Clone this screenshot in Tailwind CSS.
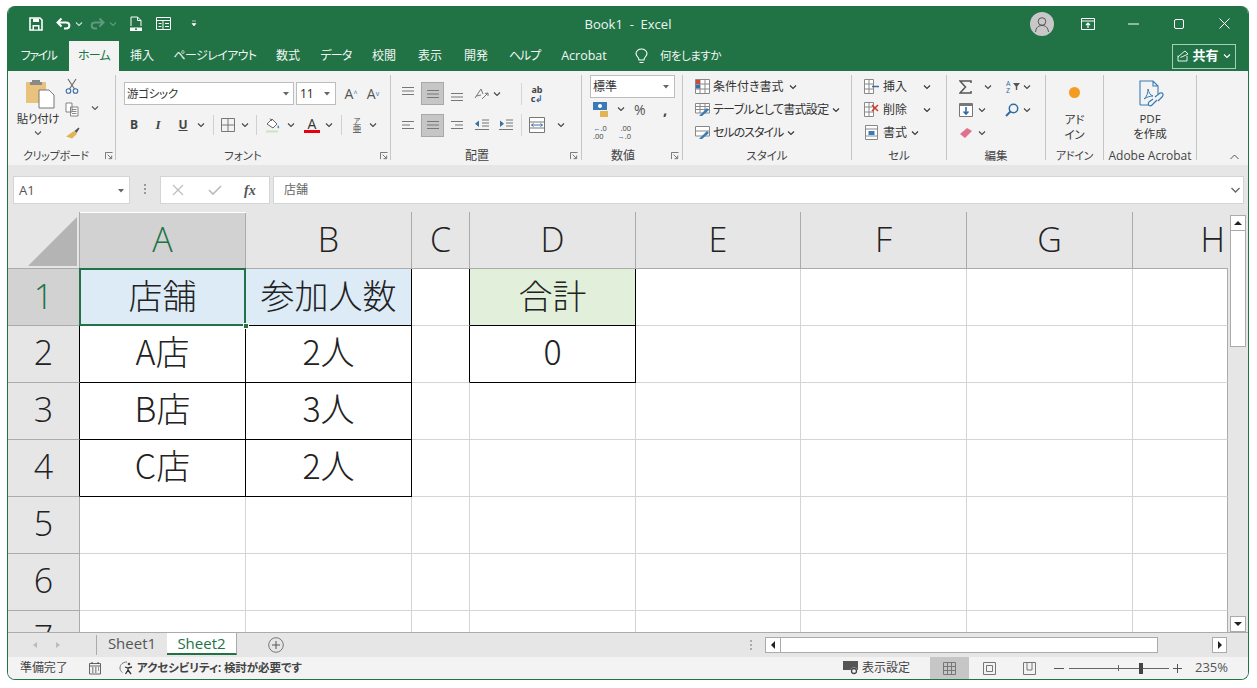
<!DOCTYPE html>
<html lang="ja">
<head>
<meta charset="UTF-8" />
<title>Book1 - Excel</title>
<script src="https://cdn.jsdelivr.net/npm/@tailwindcss/browser@4"></script>
</head>
<body class="bg-white w-[1257px] h-[688px] overflow-hidden font-['Noto_Sans','Noto_Sans_CJK_JP',sans-serif] [font-feature-settings:'palt'] text-[12px] text-[#444]">

<svg class="hidden">
  <symbol id="c" viewBox="0 0 8 8"><path d="M1 2.500L4 5.500L7 2.500" fill="none" stroke="currentColor" stroke-width="1.100"/></symbol>
  <symbol id="launch" viewBox="0 0 9 9"><path d="M.5 8V.5H8.500M3 3L7 7M4 7.500H7.500V4" fill="none" stroke="#666" stroke-width="1"/></symbol>
  <symbol id="lines" viewBox="0 0 14 10"><path d="M1 1.500H13M1 5H13M1 8.500H13" fill="none" stroke="#777" stroke-width="1"/></symbol>
  <symbol id="leftl" viewBox="0 0 14 10"><path d="M1 1.500H13M1 5H9M1 8.500H13" fill="none" stroke="#777" stroke-width="1"/></symbol>
  <symbol id="rightl" viewBox="0 0 14 10"><path d="M1 1.500H13M5 5H13M1 8.500H13" fill="none" stroke="#777" stroke-width="1"/></symbol>
</svg>

<div class="ml-[7px] mt-[6px] w-[1242px] h-[674px] rounded-[8px] overflow-hidden border-x border-b border-[#217346] flex flex-col">

  <!-- title bar -->
  <div class="h-[35px] shrink-0 bg-[#217346] flex items-center text-white relative">
    <div class="w-[492px] flex items-center text-white">
      <svg class="w-[14px] h-[14px] ml-[21px]" viewBox="0 0 14 14"><path d="M1 1H11L13 3V13H1Z" fill="none" stroke="#fff" stroke-width="1.600"/><path d="M4 1.500H10V5H4ZM3.500 8H10.500V13H3.500Z" fill="#fff"/><path d="M5 9.500H9V12.500H5Z" fill="#217346"/></svg>
      <svg class="w-[16px] h-[14px] ml-[13px]" viewBox="0 0 16 14"><path d="M5.500 1.500L1.500 5.500L5.500 9.500M2 5.500H10C14.500 5.500 14.500 11.500 10 11.500H8" fill="none" stroke="#fff" stroke-width="2"/></svg>
      <svg class="w-[8px] h-[8px] ml-[3px] text-[#cfe3d8]"><use href="#c"/></svg>
      <svg class="w-[16px] h-[14px] ml-[6px] -scale-x-100" viewBox="0 0 16 14"><path d="M5.500 1.500L1.500 5.500L5.500 9.500M2 5.500H10C14.500 5.500 14.500 11.500 10 11.500H8" fill="none" stroke="#5f9a7c" stroke-width="2"/></svg>
      <svg class="w-[8px] h-[8px] ml-[4px] text-[#5f9a7c]"><use href="#c"/></svg>
      <svg class="w-[14px] h-[16px] ml-[12px]" viewBox="0 0 14 16"><path d="M2 10V1H8.500L12 4.500V10M8.500 1V4.500H12" fill="none" stroke="#fff" stroke-width="1"/><path d="M1 11.500H13V15H1Z" fill="#fff"/><circle cx="7" cy="13.200" r="1" fill="#217346"/></svg>
      <svg class="w-[15px] h-[13px] ml-[13px]" viewBox="0 0 15 13"><path d="M.5.500H14.500V12.500H.5ZM.5 3.500H14.500M7 3.500V12.500M2.500 6.500H5.500M2.500 9.500H5.500M9 6.500H13M9 9.500H13" fill="none" stroke="#fff" stroke-width="1"/></svg>
      <svg class="w-[6px] h-[7px] ml-[20px]" viewBox="0 0 6 7"><path d="M1 1H5M1 3.500H5L3 6Z" fill="#fff" stroke="#fff" stroke-width=".6"/></svg>
    </div>
    <div class="w-[256px] text-center text-[13px] font-['Open_Sans'] pt-[2px] whitespace-pre text-[#eef5f1]">Book1  -  Excel</div>
    <div class="flex-1 flex items-center">
      <div class="ml-[274px] w-[24px] h-[24px] rounded-full bg-[#c8c8c8] flex items-center justify-center">
        <svg class="w-[18px] h-[18px]" viewBox="0 0 18 18"><circle cx="9" cy="6.500" r="3.800" fill="none" stroke="#555" stroke-width="1"/><path d="M2.500 17C3 12 6 10.500 9 10.500S15 12 15.500 17" fill="none" stroke="#555" stroke-width="1"/></svg>
      </div>
      <svg class="w-[14px] h-[12px] ml-[27px]" viewBox="0 0 14 12"><path d="M.5.500H13.500V11.500H.5ZM.5 3H13.500" fill="none" stroke="#fff" stroke-width="1"/><path d="M7 10V5M5 7L7 5L9 7" fill="none" stroke="#fff" stroke-width="1.200"/></svg>
      <svg class="w-[11px] h-[2px] ml-[33px]" viewBox="0 0 11 2"><path d="M0 1H11" stroke="#fff" stroke-width="1"/></svg>
      <svg class="w-[10px] h-[10px] ml-[35px]" viewBox="0 0 10 10"><rect x=".5" y=".5" width="9" height="9" rx="1.500" fill="none" stroke="#fff" stroke-width="1"/></svg>
      <svg class="w-[11px] h-[11px] ml-[35px]" viewBox="0 0 11 11"><path d="M.5.500L10.500 10.500M10.500.500L.5 10.500" stroke="#fff" stroke-width="1"/></svg>
    </div>
  </div>

  <!-- tabs -->
  <div class="h-[30px] shrink-0 bg-[#217346] flex items-center text-[#f2f7f4]">
    <div class="w-[61px] text-center tracking-[-1.500px]">ファイル</div>
    <div class="w-[50px] h-[30px] bg-[#f3f3f3] text-[#217346] flex items-center justify-center tracking-[-0.800px]">ホーム</div>
    <div class="w-[46px] text-center">挿入</div>
    <div class="w-[100px] text-center tracking-[-0.600px] whitespace-nowrap">ページレイアウト</div>
    <div class="w-[46px] text-center">数式</div>
    <div class="w-[50px] text-center tracking-[-0.800px]">データ</div>
    <div class="w-[46px] text-center">校閲</div>
    <div class="w-[46px] text-center">表示</div>
    <div class="w-[46px] text-center">開発</div>
    <div class="w-[51px] text-center tracking-[-1px]">ヘルプ</div>
    <div class="w-[68px] text-center font-['Open_Sans'] text-[12.500px]">Acrobat</div>
    <svg class="w-[13px] h-[16px] ml-[17px]" viewBox="0 0 13 16"><path d="M4 12C4 9 1 8.500 1 5.500C1 3 3.500 1 6.500 1S12 3 12 5.500C12 8.500 9 9 9 12ZM4.500 14.500H8.500" fill="none" stroke="#fff" stroke-width="1.100"/></svg>
    <div class="ml-[12px] w-[58px] whitespace-nowrap text-[11.500px] tracking-[-0.500px]">何をしますか</div>
    <div class="ml-[454px] w-[64px] h-[25px] border border-[#a7cdb8] flex items-center justify-center text-white">
      <svg class="w-[12px] h-[12px]" viewBox="0 0 12 12"><path d="M1 5.500V11H10V6M1 7L6 2.500L8 1L11 4L8 5.500L3.500 7.500" fill="none" stroke="#fff" stroke-width=".9"/></svg>
      <span class="ml-[3px] text-[13px] font-bold">共有</span>
      <svg class="w-[8px] h-[8px] ml-[4px]"><use href="#c"/></svg>
    </div>
  </div>

  <!-- ribbon -->
  <div class="h-[94px] shrink-0 bg-[#f3f3f3] flex pt-[4px] relative">

    <!-- clipboard -->
    <div class="w-[108px] h-[85px] border-r border-[#c6c6c6] flex flex-col shrink-0">
      <div class="h-[74px] shrink-0 flex">
        <div class="w-[60px] flex flex-col items-center">
          <svg class="w-[30px] h-[30px] mt-[4px] ml-[4px]" viewBox="0 0 30 30"><path d="M1 3H21V24H1Z" fill="#e9c27d"/><path d="M7 3.500H15V1H7Z" fill="#888"/><path d="M5 3H17V6H5Z" fill="#8a8a8a"/><path d="M14 11H24L29 16V29H14Z" fill="#fff" stroke="#777" stroke-width="1"/></svg>
          <div class="text-[11.500px] mt-[3px] leading-[14px] tracking-[-0.300px] text-[#333]">貼り付け</div>
          <svg class="w-[8px] h-[8px] mt-[3px] text-[#555]"><use href="#c"/></svg>
        </div>
        <div class="w-[24px] flex flex-col items-center ml-[-8px]">
          <svg class="w-[14px] h-[16px] mt-[3px]" viewBox="0 0 14 16"><path d="M3 1L9.500 11M11 1L4.500 11" stroke="#666" stroke-width="1.100"/><circle cx="3.500" cy="13" r="2.300" fill="none" stroke="#3a6ea5" stroke-width="1.100"/><circle cx="10.500" cy="13" r="2.300" fill="none" stroke="#3a6ea5" stroke-width="1.100"/></svg>
          <svg class="w-[14px] h-[15px] mt-[8px]" viewBox="0 0 14 15"><path d="M1 1H7V10H1ZM5.500 5H13V14H5.500ZM7 7.500H11.500M7 9.500H11.500M7 11.500H11.500" fill="#fff" stroke="#777" stroke-width=".9"/></svg>
          <svg class="w-[15px] h-[12px] mt-[10px]" viewBox="0 0 15 12"><path d="M9 4L12 7L7 11.500L1 9.500Z" fill="#e3b354"/><path d="M9.500 4L13.500 .5L14.500 1.500L11.500 6Z" fill="#555"/></svg>
        </div>
        <svg class="w-[8px] h-[8px] mt-[29px] ml-[7px] text-[#555]"><use href="#c"/></svg>
      </div>
      <div class="h-[14px] shrink-0 flex items-center text-[11px] tracking-[-0.300px]">
        <div class="ml-[15px] w-[73px] whitespace-nowrap">クリップボード</div>
        <svg class="w-[8px] h-[8px] ml-[9px]"><use href="#launch"/></svg>
      </div>
    </div>

    <!-- font -->
    <div class="w-[275px] h-[85px] border-r border-[#c6c6c6] flex flex-col shrink-0">
      <div class="h-[74px] shrink-0 pl-[8px]">
        <div class="flex items-center mt-[7px] h-[23px]">
          <div class="w-[170px] h-[23px] bg-white border border-[#bdbdbd] flex items-center pl-[2px] text-[11.500px] text-[#333] tracking-[-0.300px]">游ゴシック
            <svg class="w-[6px] h-[4px] ml-auto mr-[4px]" viewBox="0 0 6 4"><path d="M0 0H6L3 3.500Z" fill="#666"/></svg>
          </div>
          <div class="w-[40px] h-[23px] ml-[2px] bg-white border border-[#bdbdbd] flex items-center pl-[3px] text-[#333]">11
            <svg class="w-[6px] h-[4px] ml-auto mr-[5px]" viewBox="0 0 6 4"><path d="M0 0H6L3 3.500Z" fill="#666"/></svg>
          </div>
          <div class="ml-[4px] w-[22px] text-center text-[14px] text-[#555] font-['Open_Sans']">A<sup class="text-[7px] text-[#3a6ea5]">^</sup></div>
          <div class="w-[22px] text-center text-[14px] text-[#555] font-['Open_Sans']">A<sup class="text-[7px] text-[#3a6ea5]">v</sup></div>
        </div>
        <div class="flex items-center mt-[8px] h-[24px] text-[#444]">
          <div class="w-[20px] text-center font-bold font-['Open_Sans']">B</div>
          <div class="w-[28px] text-center italic font-bold font-['Liberation_Serif'] text-[13px]">I</div>
          <div class="w-[22px] text-center underline font-bold font-['Open_Sans']">U</div>
          <svg class="w-[8px] h-[8px] ml-[3px]"><use href="#c"/></svg>
          <div class="w-px h-[20px] bg-[#d0d0d0] ml-[8px]"></div>
          <svg class="w-[14px] h-[14px] ml-[7px]" viewBox="0 0 14 14"><path d="M.5.500H13.500V13.500H.5ZM7 .5V13.500M.5 7H13.500" fill="none" stroke="#777" stroke-width="1"/></svg>
          <svg class="w-[8px] h-[8px] ml-[6px]"><use href="#c"/></svg>
          <div class="w-px h-[20px] bg-[#d0d0d0] ml-[7px]"></div>
          <svg class="w-[16px] h-[16px] ml-[8px]" viewBox="0 0 16 16"><path d="M2 7L7 2L12 7L8 11Z" fill="#fff" stroke="#666" stroke-width="1"/><path d="M5 1.500L7 4" stroke="#666"/><path d="M1 13.500H13V15.500H1Z" fill="#cfe3c4"/><path d="M13 8C14 9.500 15 10.500 13.500 11.500C12 11 12.500 9.500 13 8Z" fill="#3a8fc0"/></svg>
          <svg class="w-[8px] h-[8px] ml-[6px]"><use href="#c"/></svg>
          <div class="w-[16px] ml-[9px] flex flex-col items-center">
            <span class="text-[14px] leading-[13px] font-['Open_Sans'] text-[#333]">A</span>
            <span class="w-[16px] h-[3px] bg-[#e60012]"></span>
          </div>
          <svg class="w-[8px] h-[8px] ml-[5px]"><use href="#c"/></svg>
          <div class="w-px h-[20px] bg-[#d0d0d0] ml-[8px]"></div>
          <div class="w-[12px] ml-[9px] text-center">
            <span class="block text-[7px] leading-[7px]">ア</span>
            <span class="block text-[9px] leading-[9px]">亜</span>
          </div>
          <svg class="w-[8px] h-[8px] ml-[6px]"><use href="#c"/></svg>
        </div>
      </div>
      <div class="h-[14px] shrink-0 flex items-center text-[11.500px]">
        <div class="w-[254px] text-center">フォント</div>
        <svg class="w-[8px] h-[8px] ml-[10px]"><use href="#launch"/></svg>
      </div>
    </div>

    <!-- alignment -->
    <div class="w-[191px] h-[85px] border-r border-[#c6c6c6] flex flex-col shrink-0">
      <div class="h-[74px] shrink-0 pl-[10px]">
        <div class="flex items-center mt-[7px] h-[23px]">
          <svg class="w-[14px] h-[10px] mb-[6px]"><use href="#lines"/></svg>
          <div class="w-[23px] h-[23px] ml-[6px] bg-[#c6c6c6] border border-[#a8a8a8] flex items-center justify-center"><svg class="w-[14px] h-[10px]"><use href="#lines"/></svg></div>
          <svg class="w-[14px] h-[10px] ml-[6px] mt-[6px]"><use href="#lines"/></svg>
          <svg class="w-[16px] h-[14px] ml-[10px]" viewBox="0 0 16 14"><path d="M1 11L7 2L9 7M2.500 9L7 8M8 12L14 6M14 6L11 6.500M14 6V9" fill="none" stroke="#777" stroke-width="1"/></svg>
          <svg class="w-[8px] h-[8px] ml-[3px]"><use href="#c"/></svg>
          <div class="w-px h-[22px] bg-[#d6d6d6] ml-[20px]"></div>
          <div class="ml-[8px] w-[14px] font-bold text-center">
            <span class="block text-[9px] leading-[9px]">ab</span>
            <span class="block text-[9px] leading-[9px]">c<span class="text-[#3a6ea5]">↲</span></span>
          </div>
        </div>
        <div class="flex items-center mt-[8px] h-[24px]">
          <svg class="w-[14px] h-[10px]"><use href="#leftl"/></svg>
          <div class="w-[23px] h-[23px] ml-[6px] bg-[#c6c6c6] border border-[#a8a8a8] flex items-center justify-center"><svg class="w-[14px] h-[10px]"><use href="#lines"/></svg></div>
          <svg class="w-[14px] h-[10px] ml-[6px]"><use href="#rightl"/></svg>
          <svg class="w-[16px] h-[12px] ml-[10px]" viewBox="0 0 16 12"><path d="M8 1H15M8 4H15M8 7H15M1 10.500H15" stroke="#777" fill="none"/><path d="M5 1.500V8L1 4.700Z" fill="#3a6ea5"/></svg>
          <svg class="w-[16px] h-[12px] ml-[8px]" viewBox="0 0 16 12"><path d="M8 1H15M8 4H15M8 7H15M1 10.500H15" stroke="#777" fill="none"/><path d="M2 1.500V8L6 4.700Z" fill="#3a6ea5"/></svg>
          <div class="w-px h-[22px] bg-[#d6d6d6] ml-[7px]"></div>
          <svg class="w-[16px] h-[16px] ml-[7px]" viewBox="0 0 16 16"><path d="M.5.500H15.500V15.500H.5ZM.5 5H15.500M.5 11H15.500" fill="#fff" stroke="#777"/><path d="M2.500 8H13.500M4.500 6.500L2.500 8L4.500 9.500M11.500 6.500L13.500 8L11.500 9.500" stroke="#3a6ea5" fill="none"/></svg>
          <svg class="w-[8px] h-[8px] ml-[12px]"><use href="#c"/></svg>
        </div>
      </div>
      <div class="h-[14px] shrink-0 flex items-center text-[12px]">
        <div class="w-[172px] text-center">配置</div>
        <svg class="w-[8px] h-[8px] ml-[7px]"><use href="#launch"/></svg>
      </div>
    </div>

    <!-- number -->
    <div class="w-[101px] h-[85px] border-r border-[#c6c6c6] flex flex-col shrink-0">
      <div class="h-[74px] shrink-0 pl-[8px]">
        <div class="w-[85px] h-[23px] bg-white border border-[#bdbdbd] flex items-center pl-[2px] text-[#333]">標準
          <svg class="w-[6px] h-[4px] ml-auto mr-[5px]" viewBox="0 0 6 4"><path d="M0 0H6L3 3.500Z" fill="#666"/></svg>
        </div>
        <div class="flex items-center h-[22px]">
          <svg class="w-[18px] h-[17px] ml-[2px]" viewBox="0 0 18 17"><path d="M1 1H15V9H1Z" fill="#3a7ab5"/><circle cx="8" cy="5" r="2" fill="#fff"/><path d="M8 10H16V16H8Z" fill="#e3b354"/></svg>
          <svg class="w-[8px] h-[8px] ml-[7px]"><use href="#c"/></svg>
          <div class="ml-[9px] text-[14px] w-[17px] text-[#555] font-['Open_Sans']">%</div>
          <div class="ml-[12px] text-[15px] font-bold leading-none">,</div>
        </div>
        <div class="flex items-center h-[24px] font-['Open_Sans']">
          <div class="ml-[3px] w-[14px]">
            <span class="block text-[7.500px] leading-[8px]"><span class="text-[#3a7ab5]">←</span>.0</span>
            <span class="block text-[7.500px] leading-[8px]">.00</span>
          </div>
          <div class="ml-[10px] w-[14px] text-right">
            <span class="block text-[7.500px] leading-[8px]">.00</span>
            <span class="block text-[7.500px] leading-[8px]"><span class="text-[#3a7ab5]">→</span>.0</span>
          </div>
        </div>
      </div>
      <div class="h-[14px] shrink-0 flex items-center text-[12px]">
        <div class="w-[82px] text-center">数値</div>
        <svg class="w-[8px] h-[8px] ml-[7px]"><use href="#launch"/></svg>
      </div>
    </div>

    <!-- styles -->
    <div class="w-[169px] h-[85px] border-r border-[#c6c6c6] flex flex-col shrink-0">
      <div class="h-[74px] shrink-0 pl-[12px] text-[12px] text-[#333]">
        <div class="flex items-center h-[23px]">
          <svg class="w-[15px] h-[15px]" viewBox="0 0 15 15"><path d="M.5.500H14.500V14.500H.5ZM.5 5H14.500M.5 10H14.500M5 .5V14.500M10 .5V14.500" fill="#fff" stroke="#888"/><path d="M1 1H5V5H1Z" fill="#c94a3b"/><path d="M1 5.500H5V9.500H1Z" fill="#3a6ea5"/></svg>
          <span class="ml-[3px]">条件付き書式</span><svg class="w-[8px] h-[8px] ml-[5px]"><use href="#c"/></svg>
        </div>
        <div class="flex items-center h-[23px]">
          <svg class="w-[15px] h-[15px]" viewBox="0 0 15 15"><path d="M.5 1.500H14.500V11H.5ZM.5 4.500H14.500M.5 7.500H14.500M5 1.500V11M10 1.500V11" fill="#fff" stroke="#888"/><path d="M4 14L12 6L14 8L7 14Z" fill="#3a7ab5"/></svg>
          <span class="ml-[3px] tracking-[-0.700px]">テーブルとして書式設定</span><svg class="w-[8px] h-[8px] ml-[4px]"><use href="#c"/></svg>
        </div>
        <div class="flex items-center h-[23px]">
          <svg class="w-[15px] h-[15px]" viewBox="0 0 15 15"><path d="M.5 1.500H14.500V11H.5ZM.5 6H14.500" fill="#fff" stroke="#888"/><path d="M4 14L12 6L14 8L7 14Z" fill="#3a7ab5"/></svg>
          <span class="ml-[3px] tracking-[-1px]">セルのスタイル</span><svg class="w-[8px] h-[8px] ml-[4px]"><use href="#c"/></svg>
        </div>
      </div>
      <div class="h-[14px] shrink-0 leading-[14px] text-[11.500px] text-center">スタイル</div>
    </div>

    <!-- cells -->
    <div class="w-[95px] h-[85px] border-r border-[#c6c6c6] flex flex-col shrink-0">
      <div class="h-[74px] shrink-0 pl-[12px] text-[#333]">
        <div class="flex items-center h-[23px]">
          <svg class="w-[15px] h-[15px]" viewBox="0 0 15 15"><path d="M.5.500H9.500V14.500H.5ZM.5 5H9.500M.5 10H9.500M5 .5V14.500" fill="#fff" stroke="#888"/><path d="M8 7.500H15" stroke="#3a6ea5" stroke-width="1.500"/></svg>
          <span class="ml-[4px]">挿入</span><svg class="w-[8px] h-[8px] ml-[16px]"><use href="#c"/></svg>
        </div>
        <div class="flex items-center h-[23px]">
          <svg class="w-[15px] h-[15px]" viewBox="0 0 15 15"><path d="M.5.500H9.500V14.500H.5ZM.5 5H9.500M.5 10H9.500M5 .5V14.500" fill="#fff" stroke="#888"/><path d="M8 3L14 9M14 3L8 9" stroke="#d0392b" stroke-width="1.500"/></svg>
          <span class="ml-[4px]">削除</span><svg class="w-[8px] h-[8px] ml-[16px]"><use href="#c"/></svg>
        </div>
        <div class="flex items-center h-[23px]">
          <svg class="w-[15px] h-[15px]" viewBox="0 0 15 15"><path d="M1.500.500H13.500V14.500H1.500ZM1.500 4H13.500M1.500 11H13.500" fill="#fff" stroke="#888"/><path d="M4.500 6H10.500V10H4.500Z" fill="#3a7ab5"/></svg>
          <span class="ml-[4px]">書式</span><svg class="w-[8px] h-[8px] ml-[4px]"><use href="#c"/></svg>
        </div>
      </div>
      <div class="h-[14px] shrink-0 leading-[14px] text-[11.500px] text-center">セル</div>
    </div>

    <!-- editing -->
    <div class="w-[99px] h-[85px] border-r border-[#c6c6c6] flex flex-col shrink-0">
      <div class="h-[74px] shrink-0 pl-[12px]">
        <div class="flex items-center h-[23px]">
          <svg class="w-[13px] h-[14px]" viewBox="0 0 13 14"><path d="M12 3V1H1L6.500 7L1 13H12V11" fill="none" stroke="#555" stroke-width="1.500"/></svg>
          <svg class="w-[8px] h-[8px] ml-[12px]"><use href="#c"/></svg>
          <div class="ml-[14px] w-[14px] text-[#3a6ea5]">
            <span class="block text-[7px] leading-[7px]">A</span>
            <span class="block text-[7px] leading-[7px]">Z</span>
          </div>
          <svg class="w-[7px] h-[7px] ml-[-7px]" viewBox="0 0 7 7"><path d="M0 0H7L4.200 3.500V7H2.800V3.500Z" fill="#555"/></svg>
          <svg class="w-[8px] h-[8px] ml-[3px]"><use href="#c"/></svg>
        </div>
        <div class="flex items-center h-[23px]">
          <svg class="w-[14px] h-[14px]" viewBox="0 0 14 14"><path d="M.5.500H13.500V13.500H.5Z" fill="#fff" stroke="#777"/><path d="M.5 2H13.500" stroke="#777" stroke-width="2"/><path d="M7 4V11M4.500 8.500L7 11L9.500 8.500" fill="none" stroke="#2f6ca5" stroke-width="1.600"/></svg>
          <svg class="w-[8px] h-[8px] ml-[5px]"><use href="#c"/></svg>
          <svg class="w-[14px] h-[14px] ml-[19px]" viewBox="0 0 14 14"><circle cx="8.500" cy="5.500" r="4.200" fill="none" stroke="#2f6ca5" stroke-width="1.500"/><path d="M5.500 8.500L1 13" stroke="#2f6ca5" stroke-width="2"/></svg>
          <svg class="w-[8px] h-[8px] ml-[4px]"><use href="#c"/></svg>
        </div>
        <div class="flex items-center h-[23px]">
          <svg class="w-[14px] h-[12px]" viewBox="0 0 14 12"><path d="M1 7L8 1L13 4L6 11Z" fill="#e0708c"/></svg>
          <svg class="w-[8px] h-[8px] ml-[5px]"><use href="#c"/></svg>
        </div>
      </div>
      <div class="h-[14px] shrink-0 leading-[14px] text-[11.500px] text-center">編集</div>
    </div>

    <!-- add-in -->
    <div class="w-[58px] h-[85px] border-r border-[#c6c6c6] flex flex-col items-center shrink-0">
      <div class="h-[74px] shrink-0 flex flex-col items-center text-[#333]">
        <div class="w-[11px] h-[11px] rounded-full bg-[#f59a23] mt-[12px]"></div>
        <div class="mt-[14px] text-center text-[11.500px] leading-[15px]">アド<br />イン</div>
      </div>
      <div class="h-[14px] shrink-0 leading-[14px] text-[11px] tracking-[-0.300px]">アドイン</div>
    </div>

    <!-- acrobat -->
    <div class="w-[93px] h-[85px] border-r border-[#c6c6c6] flex flex-col items-center shrink-0">
      <div class="h-[74px] shrink-0 flex flex-col items-center text-[#333]">
        <svg class="w-[27px] h-[30px] mt-[5px]" viewBox="0 0 27 30"><path d="M3 25V1H16L21 6V14M3 25H12M16 1V6H21" fill="none" stroke="#3a7ab5" stroke-width="1.100"/><path d="M7 19C10 17 11 12 11 9C12 13 13 15 16 16C13 16 10 17 7 19Z" fill="none" stroke="#3a7ab5"/><path d="M18 17L23 13C26 12 27 15 25 17L21 21M20 20L15 25C13 27 10 25 12 22L16 19" fill="none" stroke="#3a7ab5" stroke-width="1.200"/></svg>
        <div class="mt-[1px] text-center text-[11.500px] leading-[15px]"><span class="font-['Open_Sans']">PDF</span><br />を作成</div>
      </div>
      <div class="h-[14px] shrink-0 leading-[14px] text-[12px] font-['Open_Sans'] whitespace-nowrap">Adobe Acrobat</div>
    </div>

    <svg class="w-[9px] h-[6px] mt-[79px] ml-[33px]" viewBox="0 0 9 6"><path d="M.5 5L4.500 1L8.500 5" fill="none" stroke="#555" stroke-width="1"/></svg>
  </div>

  <!-- formula bar -->
  <div class="h-[47px] shrink-0 bg-[#e6e6e6] flex pt-[11px] pl-[5px]">
    <div class="w-[117px] h-[28px] bg-white border border-[#d4d4d4] flex items-center pl-[5px] pt-[2px] text-[13px] text-[#555] font-['Open_Sans']">A1
      <svg class="w-[6px] h-[4px] ml-auto mr-[5px]" viewBox="0 0 6 4"><path d="M0 0H6L3 3.500Z" fill="#666"/></svg>
    </div>
    <div class="w-[30px] flex flex-col items-center justify-center gap-[2px] h-[26px]">
      <span class="w-[2px] h-[2px] bg-[#999]"></span><span class="w-[2px] h-[2px] bg-[#999]"></span><span class="w-[2px] h-[2px] bg-[#999]"></span>
    </div>
    <div class="w-[110px] h-[28px] bg-white border border-[#d4d4d4] flex items-center">
      <svg class="w-[12px] h-[12px] ml-[11px]" viewBox="0 0 12 12"><path d="M1 1L11 11M11 1L1 11" stroke="#bbb" stroke-width="1.100"/></svg>
      <svg class="w-[14px] h-[12px] ml-[24px]" viewBox="0 0 14 12"><path d="M1 6L5 10L13 2" fill="none" stroke="#bbb" stroke-width="1.600"/></svg>
      <span class="ml-[22px] font-['Liberation_Serif'] italic font-bold text-[14px] text-[#555]">fx</span>
    </div>
    <div class="w-[971px] h-[28px] ml-[3px] bg-white border border-[#d4d4d4] flex items-center pl-[10px] text-[#666]">店舗
      <svg class="w-[9px] h-[6px] ml-auto mr-[3px]" viewBox="0 0 9 6"><path d="M.5 1L4.500 5L8.500 1" fill="none" stroke="#666" stroke-width="1.300"/></svg>
    </div>
  </div>

  <!-- sheet -->
  <div class="h-[420px] shrink-0 flex overflow-hidden bg-white">
    <div class="w-[1220px] h-[420px] overflow-hidden grid grid-cols-[72px_166px_166px_58px_166px_165px_166px_166px_95px] grid-rows-[57px_57px_57px_57px_57px_57px_57px_57px] text-[34px] font-light text-[#222] font-['Noto_Sans_CJK_JP']">
      <!-- header row -->
      <div class="bg-[#e6e6e6] border-r border-b border-[#ababab] flex items-end justify-end pr-[2px] pb-[2px]">
        <svg class="w-[49px] h-[49px]" viewBox="0 0 49 49"><path d="M0 49L49 0V49Z" fill="#b4b4b4"/></svg>
      </div>
      <div class="bg-[#d2d2d2] border-b border-r border-[#ababab] mt-px pb-[2px] flex items-center justify-center text-[#217346] font-['Open_Sans']">A</div>
      <div class="bg-[#e6e6e6] border-b border-r border-[#ababab] pb-[2px] flex items-center justify-center font-['Open_Sans']">B</div>
      <div class="bg-[#e6e6e6] border-b border-r border-[#ababab] pb-[2px] flex items-center justify-center font-['Open_Sans']">C</div>
      <div class="bg-[#e6e6e6] border-b border-r border-[#ababab] pb-[2px] flex items-center justify-center font-['Open_Sans']">D</div>
      <div class="bg-[#e6e6e6] border-b border-r border-[#ababab] pb-[2px] flex items-center justify-center font-['Open_Sans']">E</div>
      <div class="bg-[#e6e6e6] border-b border-r border-[#ababab] pb-[2px] flex items-center justify-center font-['Open_Sans']">F</div>
      <div class="bg-[#e6e6e6] border-b border-r border-[#ababab] pb-[2px] flex items-center justify-center font-['Open_Sans']">G</div>
      <div class="bg-[#e6e6e6] border-b border-[#ababab] pb-[2px] flex items-center justify-end pr-[3px] font-['Open_Sans']">H</div>
      <!-- row 1 -->
      <div class="bg-[#d2d2d2] border-r border-b border-[#ababab] pb-[2px] flex items-center justify-center text-[#217346] font-['Open_Sans']">1</div>
      <div class="relative bg-[#ddebf7] border-r border-b border-black pb-[6px] flex items-center justify-center">店舗
        <div class="absolute inset-[-1px] border-2 border-[#217346]"></div>
        <div class="absolute right-[-4px] bottom-[-4px] w-[6px] h-[6px] bg-[#217346] border border-white"></div>
      </div>
      <div class="bg-[#ddebf7] border-r border-b border-black pb-[6px] flex items-center justify-center">参加人数</div>
      <div class="border-r border-b border-r-black border-b-[#d4d4d4]"></div>
      <div class="bg-[#e2efda] border-r border-b border-black pb-[6px] flex items-center justify-center">合計</div>
      <div class="border-r border-b border-[#d4d4d4]"></div><div class="border-r border-b border-[#d4d4d4]"></div><div class="border-r border-b border-[#d4d4d4]"></div><div class="border-r border-b border-[#ababab] border-b-[#d4d4d4]"></div>
      <!-- row 2 -->
      <div class="bg-[#e6e6e6] border-r border-b border-r-black border-b-[#ababab] pb-[4px] flex items-center justify-center font-['Open_Sans']">2</div>
      <div class="border-r border-b border-black pb-[8px] flex items-center justify-center">A店</div>
      <div class="border-r border-b border-black pb-[8px] flex items-center justify-center">2人</div>
      <div class="border-r border-b border-r-black border-b-[#d4d4d4]"></div>
      <div class="border-r border-b border-black pb-[8px] flex items-center justify-center">0</div>
      <div class="border-r border-b border-[#d4d4d4]"></div><div class="border-r border-b border-[#d4d4d4]"></div><div class="border-r border-b border-[#d4d4d4]"></div><div class="border-r border-b border-[#ababab] border-b-[#d4d4d4]"></div>
      <!-- row 3 -->
      <div class="bg-[#e6e6e6] border-r border-b border-r-black border-b-[#ababab] pb-[4px] flex items-center justify-center font-['Open_Sans']">3</div>
      <div class="border-r border-b border-black pb-[8px] flex items-center justify-center">B店</div>
      <div class="border-r border-b border-black pb-[8px] flex items-center justify-center">3人</div>
      <div class="border-r border-b border-[#d4d4d4]"></div><div class="border-r border-b border-[#d4d4d4]"></div><div class="border-r border-b border-[#d4d4d4]"></div><div class="border-r border-b border-[#d4d4d4]"></div><div class="border-r border-b border-[#d4d4d4]"></div><div class="border-r border-b border-[#ababab] border-b-[#d4d4d4]"></div>
      <!-- row 4 -->
      <div class="bg-[#e6e6e6] border-r border-b border-r-black border-b-[#ababab] pb-[4px] flex items-center justify-center font-['Open_Sans']">4</div>
      <div class="border-r border-b border-black pb-[8px] flex items-center justify-center">C店</div>
      <div class="border-r border-b border-black pb-[8px] flex items-center justify-center">2人</div>
      <div class="border-r border-b border-[#d4d4d4]"></div><div class="border-r border-b border-[#d4d4d4]"></div><div class="border-r border-b border-[#d4d4d4]"></div><div class="border-r border-b border-[#d4d4d4]"></div><div class="border-r border-b border-[#d4d4d4]"></div><div class="border-r border-b border-[#ababab] border-b-[#d4d4d4]"></div>
      <!-- row 5 -->
      <div class="bg-[#e6e6e6] border-r border-b border-[#ababab] pb-[4px] flex items-center justify-center font-['Open_Sans']">5</div>
      <div class="border-r border-b border-[#d4d4d4]"></div><div class="border-r border-b border-[#d4d4d4]"></div><div class="border-r border-b border-[#d4d4d4]"></div><div class="border-r border-b border-[#d4d4d4]"></div><div class="border-r border-b border-[#d4d4d4]"></div><div class="border-r border-b border-[#d4d4d4]"></div><div class="border-r border-b border-[#d4d4d4]"></div><div class="border-r border-b border-[#ababab] border-b-[#d4d4d4]"></div>
      <!-- row 6 -->
      <div class="bg-[#e6e6e6] border-r border-b border-[#ababab] pb-[4px] flex items-center justify-center font-['Open_Sans']">6</div>
      <div class="border-r border-b border-[#d4d4d4]"></div><div class="border-r border-b border-[#d4d4d4]"></div><div class="border-r border-b border-[#d4d4d4]"></div><div class="border-r border-b border-[#d4d4d4]"></div><div class="border-r border-b border-[#d4d4d4]"></div><div class="border-r border-b border-[#d4d4d4]"></div><div class="border-r border-b border-[#d4d4d4]"></div><div class="border-r border-b border-[#ababab] border-b-[#d4d4d4]"></div>
      <!-- row 7 -->
      <div class="bg-[#e6e6e6] border-r border-[#ababab] pb-[4px] flex items-center justify-center font-['Open_Sans']">7</div>
      <div class="border-r border-[#d4d4d4]"></div><div class="border-r border-[#d4d4d4]"></div><div class="border-r border-[#d4d4d4]"></div><div class="border-r border-[#d4d4d4]"></div><div class="border-r border-[#d4d4d4]"></div><div class="border-r border-[#d4d4d4]"></div><div class="border-r border-[#d4d4d4]"></div><div class="border-r border-[#ababab]"></div>
    </div>
    <!-- vertical scrollbar -->
    <div class="w-[20px] bg-[#e6e6e6] flex flex-col items-center pt-[3px]">
      <div class="w-[16px] h-[16px] bg-white border border-[#ababab] flex items-center justify-center"><svg class="w-[8px] h-[4px]" viewBox="0 0 8 4"><path d="M0 4L4 0L8 4Z" fill="#222"/></svg></div>
      <div class="w-[16px] h-[116px] bg-white border border-t-0 border-[#ababab]"></div>
      <div class="flex-1"></div>
      <div class="w-[16px] h-[16px] bg-white border border-[#ababab] flex items-center justify-center"><svg class="w-[8px] h-[4px]" viewBox="0 0 8 4"><path d="M0 0L4 4L8 0Z" fill="#222"/></svg></div>
    </div>
  </div>

  <!-- sheet tabs -->
  <div class="h-[25px] shrink-0 bg-[#e6e6e6] border-t border-[#ababab] flex items-center text-[14px]">
    <svg class="w-[4px] h-[6px] ml-[25px]" viewBox="0 0 4 6"><path d="M4 0L0 3L4 6Z" fill="#bbb"/></svg>
    <svg class="w-[4px] h-[6px] ml-[19px]" viewBox="0 0 4 6"><path d="M0 0L4 3L0 6Z" fill="#bbb"/></svg>
    <div class="w-px h-[20px] bg-[#ababab] ml-[36px]"></div>
    <div class="w-[70px] text-center text-[#555] font-['Open_Sans'] text-[15px] pb-[3px]">Sheet1</div>
    <div class="w-[70px] h-[22px] self-start bg-white border-b-2 border-[#217346] border-r border-r-[#ababab] flex items-center justify-center text-[#217346] font-['Open_Sans'] text-[15px]">Sheet2</div>
    <svg class="w-[16px] h-[16px] ml-[31px]" viewBox="0 0 16 16"><circle cx="8" cy="8" r="7.300" fill="none" stroke="#777" stroke-width="1"/><path d="M8 4V12M4 8H12" stroke="#555" stroke-width="1"/></svg>
    <div class="ml-[466px] flex flex-col gap-[2px]"><span class="w-[2px] h-[2px] bg-[#aaa]"></span><span class="w-[2px] h-[2px] bg-[#aaa]"></span><span class="w-[2px] h-[2px] bg-[#aaa]"></span></div>
    <div class="w-[16px] h-[16px] ml-[13px] bg-white border border-[#ababab] flex items-center justify-center"><svg class="w-[4px] h-[8px]" viewBox="0 0 4 8"><path d="M4 0L0 4L4 8Z" fill="#222"/></svg></div>
    <div class="w-[377px] h-[16px] bg-white border border-l-0 border-[#ababab]"></div>
    <div class="w-[54px]"></div>
    <div class="w-[15px] h-[16px] bg-white border border-[#ababab] flex items-center justify-center"><svg class="w-[4px] h-[8px]" viewBox="0 0 4 8"><path d="M0 0L4 4L0 8Z" fill="#222"/></svg></div>
  </div>

  <!-- status bar -->
  <div class="h-[22px] shrink-0 bg-[#f3f3f3] flex items-center text-[12px] text-[#444]">
    <div class="ml-[12px] w-[48px] tracking-[-0.100px]">準備完了</div>
    <svg class="w-[14px] h-[14px] ml-[20px]" viewBox="0 0 14 14"><path d="M1.500 2.500H12.500V13H1.500ZM1.500 5H12.500" fill="none" stroke="#666"/><path d="M4 1V3M10 1V3M4 7H5.500M7 7H8.500M10 7H11M4 9H5.500M7 9H8.500M10 9H11M4 11H5.500M7 11H8.500" stroke="#444"/></svg>
    <svg class="w-[17px] h-[14px] ml-[17px]" viewBox="0 0 17 14"><path d="M8 1C4 1 1 3.500 1 7C1 9 2 10.500 3.500 11.500" fill="none" stroke="#777"/><circle cx="10" cy="3" r="1.300" fill="#444"/><path d="M6 6L9 7L13 6M9 7V9L6.500 13M9 9L12 13" fill="none" stroke="#333" stroke-width="1.300"/></svg>
    <div class="ml-[1px] font-bold text-[11.500px] tracking-[-0.100px]">アクセシビリティ: 検討が必要です</div>
    <svg class="w-[18px] h-[16px] ml-auto mr-[1px]" viewBox="0 0 18 16"><path d="M0 1H15V10H0Z" fill="#555"/><circle cx="11" cy="11" r="3.500" fill="#f3f3f3"/><circle cx="11" cy="11" r="2.500" fill="none" stroke="#444" stroke-width="1.300"/></svg>
    <div class="w-[48px] whitespace-nowrap">表示設定</div>
    <div class="w-[39px] h-[22px] ml-[20px] bg-[#c6c6c6] flex items-center justify-center">
      <svg class="w-[13px] h-[13px]" viewBox="0 0 13 13"><path d="M.5.500H12.500V12.500H.5ZM4.500.5V12.500M8.500.5V12.500M.5 4.500H12.500M.5 8.500H12.500" fill="none" stroke="#777"/></svg>
    </div>
    <svg class="w-[13px] h-[13px] ml-[14px]" viewBox="0 0 13 13"><path d="M.5.500H12.500V12.500H.5ZM3.500 3.500H9.500V9.500H3.500Z" fill="none" stroke="#777"/></svg>
    <svg class="w-[13px] h-[13px] ml-[27px]" viewBox="0 0 13 13"><path d="M.5.500H12.500V12.500H.5ZM4 .5V8H9V.5" fill="none" stroke="#777"/></svg>
    <div class="ml-[18px] w-[10px] h-px bg-[#555]"></div>
    <div class="ml-[5px] w-[100px] h-px bg-[#666] flex items-center">
      <span class="ml-[49px] w-px h-[6px] bg-[#666]"></span>
      <span class="ml-[20px] w-[4px] h-[11px] bg-[#444]"></span>
    </div>
    <div class="ml-[4px] w-[9px] h-[9px] relative flex items-center justify-center"><span class="w-[9px] h-px bg-[#555]"></span><span class="absolute w-px h-[9px] bg-[#555]"></span></div>
    <div class="ml-[7px] w-[40px] mr-[19px] text-[13px] text-[#555] font-['Open_Sans'] text-right pr-[1px] whitespace-nowrap">235%</div>
  </div>
</div>
</body>
</html>
